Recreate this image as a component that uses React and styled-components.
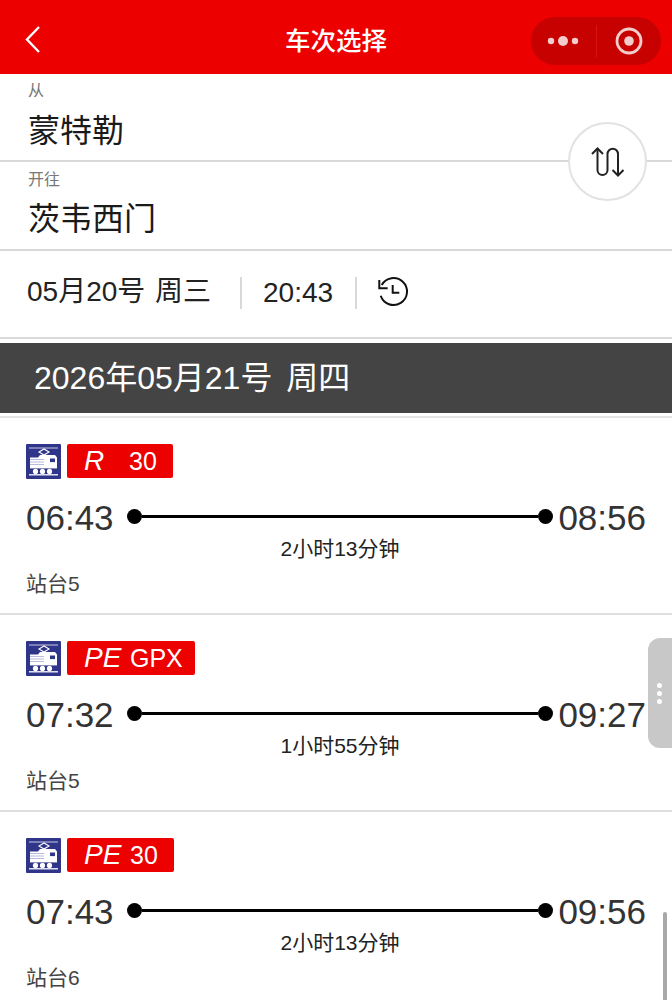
import React from 'react';
import styled, { createGlobalStyle } from 'styled-components';

const FONT = `"Liberation Sans", "Noto Sans CJK SC", sans-serif`;

const Global = createGlobalStyle`
  html, body {
    margin: 0;
    padding: 0;
    background: #fff;
    font-family: ${FONT};
    overflow: hidden;
  }
`;

const Page = styled.div`
  position: relative;
  width: 672px;
  height: 1000px;
  overflow: hidden;
  background: #fff;
`;

const NavBar = styled.div`
  height: 74px;
  background: #ec0000;
  display: flex;
  align-items: center;
  justify-content: space-between;
  padding: 4px 11px 0 20px;
  box-sizing: border-box;
  position: relative;
`;

const NavTitle = styled.div`
  position: absolute;
  left: 0;
  right: 0;
  top: 23px;
  text-align: center;
  color: #fff;
  font-size: 25.5px;
  line-height: 36px;
  font-weight: 500;
`;

const BackButton = styled.svg`
  width: 24px;
  height: 30px;
  display: block;
`;

const Capsule = styled.div`
  width: 130px;
  height: 48px;
  margin-top: 4px;
  border-radius: 24px;
  background: #c70000;
  display: flex;
  align-items: center;
`;

const CapsulePart = styled.div`
  flex: 1;
  height: 100%;
  display: flex;
  align-items: center;
  justify-content: center;
`;

const CapsuleDivider = styled.div`
  width: 1px;
  height: 32px;
  background: #d81414;
`;

const StationRow = styled.div`
  height: ${(p) => p.$height}px;
  border-bottom: 2px solid #d9d9d9;
  box-sizing: border-box;
  padding: ${(p) => p.$top}px 28px 0;
`;

const StationLabel = styled.div`
  font-size: 16px;
  line-height: 20px;
  color: #777;
`;

const StationName = styled.div`
  font-size: 32px;
  line-height: 46px;
  margin-top: ${(p) => p.$gap}px;
  color: #1a1a1a;
`;

const SwapButton = styled.div`
  position: absolute;
  left: 568px;
  top: 122px;
  width: 79px;
  height: 79px;
  box-sizing: border-box;
  border-radius: 50%;
  border: 2px solid #e2e2e2;
  background: #fff;
  display: flex;
  align-items: center;
  justify-content: center;
`;

const DateRow = styled.div`
  height: 88px;
  border-bottom: 2px solid #d9d9d9;
  box-sizing: border-box;
  display: flex;
  align-items: center;
  padding: 0 0 2px 27px;
  color: #222;
`;

const DateText = styled.div`
  width: 213px;
  font-size: 28px;
  line-height: 36px;
  margin-top: -3px;
  word-spacing: 2px;
  white-space: pre;
`;

const VLine = styled.div`
  width: 2px;
  height: 32px;
  background: #d9d9d9;
`;

const TimeText = styled.div`
  width: 92px;
  padding-left: 21px;
  font-size: 28px;
`;

const HistoryIcon = styled.svg`
  width: 34px;
  height: 34px;
  margin-left: 19px;
  margin-top: -3px;
  display: block;
`;

const DayBand = styled.div`
  margin-top: 4px;
  height: 70px;
  background: #444;
  color: #fff;
  font-size: 32px;
  line-height: 70px;
  word-spacing: 5px;
  padding-left: 34px;
  white-space: pre;
`;

const BandGap = styled.div`
  height: 5px;
  border-bottom: 2px solid #e4e4e4;
  box-sizing: border-box;
`;

const Card = styled.div`
  height: 197px;
  border-bottom: 2px solid #dedede;
  box-sizing: border-box;
  padding: 26px 26px 0;
`;

const BadgeLine = styled.div`
  display: flex;
  align-items: flex-start;
  gap: 6px;
  height: 35px;
`;

const TrainIcon = styled.svg`
  width: 35px;
  height: 35px;
  display: block;
`;

const Badge = styled.div`
  height: 34px;
  width: ${(p) => p.$width}px;
  box-sizing: border-box;
  background: #ec0000;
  border-radius: 2px;
  color: #fff;
  display: flex;
  align-items: center;
  padding-left: 17px;
`;

const BadgeType = styled.span`
  font-style: italic;
  font-size: 28px;
  width: ${(p) => p.$width}px;
`;

const BadgeNumber = styled.span`
  font-size: 25px;
`;

const TimeLine = styled.div`
  display: flex;
  align-items: center;
  margin-top: 19px;
  height: 40px;
  width: 620px;
`;

const Clock = styled.div`
  font-size: 35px;
  line-height: 40px;
  color: #333;
  width: 87px;
  flex: none;
`;

const Track = styled.div`
  flex: 1;
  display: flex;
  align-items: center;
  margin: -4px 5px 0 14px;
`;

const Dot = styled.div`
  width: 15px;
  height: 15px;
  border-radius: 50%;
  background: #000;
  flex: none;
`;

const TrackBar = styled.div`
  flex: 1;
  height: 3px;
  background: #000;
`;

const ArriveClock = styled(Clock)`
  width: auto;
`;

const Duration = styled.div`
  text-align: center;
  font-size: 21px;
  line-height: 28px;
  color: #222;
  margin-top: -3px;
  margin-left: -26px;
  width: 680px;
`;

const Platform = styled.div`
  font-size: 21px;
  line-height: 28px;
  color: #444;
  margin-top: 7px;
`;

const SideHandle = styled.div`
  position: absolute;
  left: 648px;
  top: 638px;
  width: 30px;
  height: 110px;
  border-radius: 12px 0 0 12px;
  background: #c8c8c8;
  display: flex;
  flex-direction: column;
  align-items: flex-start;
  justify-content: center;
  gap: 3px;
  padding-left: 9px;
  box-sizing: border-box;
`;

const HandleDot = styled.div`
  width: 5px;
  height: 5px;
  border-radius: 50%;
  background: #fff;
`;

const Scrollbar = styled.div`
  position: absolute;
  left: 663px;
  top: 912px;
  width: 4px;
  height: 88px;
  border-radius: 2px 2px 0 0;
  background: #a8a8a8;
`;

const Locomotive = () => (
  <TrainIcon viewBox="0 0 35 35">
    <rect width="35" height="35" rx="1" fill="#2f3589" />
    <path d="M3 4h29" stroke="#c9cbe4" strokeWidth="1" />
    <path d="M18 5l-5 3 5 3 5-3z" fill="none" stroke="#fff" strokeWidth="1.1" />
    <path d="M14 11h15l2 2.5V25H4V13.5h8z" fill="#fff" />
    <path d="M4 15.5h14M4 18h14M4 20.5h14" stroke="#a6a9d2" strokeWidth="0.8" />
    <rect x="24" y="14.5" width="5" height="3.6" fill="#2f3589" />
    <rect x="3" y="24.4" width="29" height="0.9" fill="#2f3589" />
    <circle cx="9.5" cy="27.4" r="2.6" fill="#fff" />
    <circle cx="16.5" cy="27.4" r="2.6" fill="#fff" />
    <circle cx="23.5" cy="27.4" r="2.6" fill="#fff" />
    <path d="M3 30.8h29" stroke="#fff" strokeWidth="1.3" />
  </TrainIcon>
);

const trains = [
  { type: 'R', number: '30', badgeWidth: 106, typeWidth: 45, depart: '06:43', arrive: '08:56', duration: '2小时13分钟', platform: '站台5' },
  { type: 'PE', number: 'GPX', badgeWidth: 128, typeWidth: 46, depart: '07:32', arrive: '09:27', duration: '1小时55分钟', platform: '站台5' },
  { type: 'PE', number: '30', badgeWidth: 107, typeWidth: 46, depart: '07:43', arrive: '09:56', duration: '2小时13分钟', platform: '站台6' },
];

const App = () => (
  <Page>
    <Global />
    <NavBar>
      <BackButton viewBox="0 0 24 30">
        <path d="M19 3L7 15.5 19 28" fill="none" stroke="#fff" strokeWidth="2.4" />
      </BackButton>
      <NavTitle>车次选择</NavTitle>
      <Capsule>
        <CapsulePart>
          <svg width="34" height="12" viewBox="0 0 34 12">
            <circle cx="5" cy="6" r="3.2" fill="#f3cccc" />
            <circle cx="17" cy="6" r="5" fill="#f3cccc" />
            <circle cx="29" cy="6" r="3.2" fill="#f3cccc" />
          </svg>
        </CapsulePart>
        <CapsuleDivider />
        <CapsulePart>
          <svg width="28" height="28" viewBox="0 0 28 28">
            <circle cx="14" cy="14" r="12" fill="none" stroke="#f3cccc" strokeWidth="2.8" />
            <circle cx="14" cy="14" r="4.8" fill="#f3cccc" />
          </svg>
        </CapsulePart>
      </Capsule>
    </NavBar>

    <StationRow $height={88} $top={7}>
      <StationLabel>从</StationLabel>
      <StationName $gap={7}>蒙特勒</StationName>
    </StationRow>
    <StationRow $height={89} $top={8}>
      <StationLabel>开往</StationLabel>
      <StationName $gap={6}>茨韦西门</StationName>
    </StationRow>
    <SwapButton>
      <svg width="36" height="32" viewBox="0 0 36 32" fill="none" stroke="#222" strokeWidth="2">
        <path d="M2 8l5.5-5.5L13 8" />
        <path d="M7.5 2.5V24a5 5 0 0 0 10 0V8a5 5 0 0 1 10.5 0v21.5" />
        <path d="M22.5 24l5.5 5.5 5.5-5.5" />
      </svg>
    </SwapButton>

    <DateRow>
      <DateText>05月20号 周三</DateText>
      <VLine />
      <TimeText>20:43</TimeText>
      <VLine />
      <HistoryIcon viewBox="0 0 34 34" fill="none" stroke="#111" strokeWidth="2">
        <path d="M5.7 10A13.5 13.5 0 1 1 4.7 20.7" />
        <path d="M3.3 5v8.3h8.4" />
        <path d="M16.7 10v7.7h6.6" />
      </HistoryIcon>
    </DateRow>

    <DayBand>2026年05月21号 周四</DayBand>
    <BandGap />

    {trains.map((t) => (
      <Card key={t.depart}>
        <BadgeLine>
          <Locomotive />
          <Badge $width={t.badgeWidth}>
            <BadgeType $width={t.typeWidth}>{t.type}</BadgeType>
            <BadgeNumber>{t.number}</BadgeNumber>
          </Badge>
        </BadgeLine>
        <TimeLine>
          <Clock>{t.depart}</Clock>
          <Track>
            <Dot />
            <TrackBar />
            <Dot />
          </Track>
          <ArriveClock>{t.arrive}</ArriveClock>
        </TimeLine>
        <Duration>{t.duration}</Duration>
        <Platform>{t.platform}</Platform>
      </Card>
    ))}

    <SideHandle>
      <HandleDot />
      <HandleDot />
      <HandleDot />
    </SideHandle>
    <Scrollbar />
  </Page>
);

export default App;
